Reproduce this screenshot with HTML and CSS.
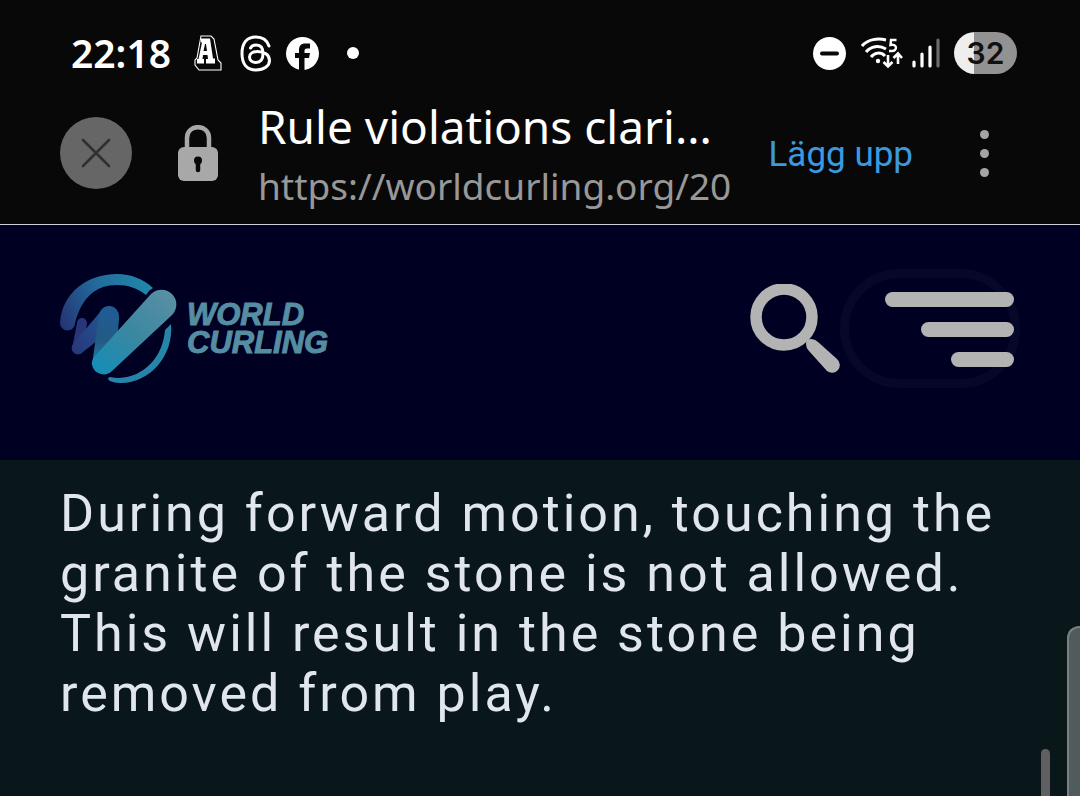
FILE: index.html
```html
<!DOCTYPE html>
<html lang="sv">
<head>
<meta charset="utf-8">
<meta name="viewport" content="width=device-width, initial-scale=1">
<title>Rule violations clarified</title>
<link rel="stylesheet" href="styles.css">
</head>
<body>
<div class="status-bar">
  <div class="status-left">
    <time class="clock">22:18</time>
    <svg class="note-a" width="28" height="36" viewBox="0 0 28 36" aria-hidden="true">
      <path d="M7 1H17L20 4L24 25L27 28V35H5L1 30V25L3 23Z" fill="none" stroke="#fff" stroke-width="1.1"/>
      <path fill-rule="evenodd" d="M7 3.500H16L19 23.500H21V28.500H12V24H14L13.500 20H9L8.500 24H10V28.500H3V24H4.500L8 7.500H7ZM11 9L9.500 16H13L12 9Z" fill="#fff"/>
    </svg>
    <svg class="threads" width="32" height="37" viewBox="0 0 32 37" fill="none" stroke="#fff" stroke-width="3" stroke-linecap="round" aria-hidden="true">
      <path d="M29 11C27 5 22.500 2 16 2C6.500 2 2 8.500 2 18.500S6.500 35 16 35C24 35 29.500 31 29.500 25.500C29.500 19.500 24 16.500 17.500 16.500C13 16.500 9.500 18.500 9.500 22C9.500 25.500 12.500 27.500 16 27.500C20.500 27.500 23 24.500 23 18.500C23 12.500 20.500 10 16.500 10C13.500 10 11.500 11 10.500 13"/>
    </svg>
    <svg class="facebook" width="33" height="33" viewBox="0 0 33 33" aria-hidden="true">
      <circle cx="16.500" cy="16.500" r="16.500" fill="#fff"/>
      <path d="M13 33V21H9V16H13V13C13 8.500 15.500 6.500 19 6.500H24V11.500H21C19 11.500 18.500 12.500 18.500 14V16H24L23 21H18.500V33Z" fill="#080808"/>
    </svg>
    <span class="more-notes"></span>
  </div>
  <div class="status-right">
    <svg width="33" height="33" viewBox="0 0 33 33" aria-hidden="true"><circle cx="16.500" cy="16.500" r="16.500" fill="#fff"/><path d="M9 16.500H24" stroke="#080808" stroke-width="4" stroke-linecap="round"/></svg>
    <svg class="wifi" width="42" height="32" viewBox="0 0 42 32" fill="none" stroke="#fff" stroke-width="3" aria-hidden="true">
      <path d="M1 9C7 2 17 1 25 3M5 15C10 9 18 8 25 12M10 20C14 15 20 15 24 19"/>
      <circle cx="17" cy="24" r="2.200" fill="#fff" stroke="none"/>
      <path d="M35.500 3H30L29.500 8C36.500 6.500 36.500 14 31 14H28" stroke-width="2.400"/>
      <path d="M27 18V29M22.500 25L27 29.500L31.500 25M37 27V17M32.500 21L37 16.500L41 21" stroke-width="2.600"/>
    </svg>
    <svg class="signal" width="28" height="30" viewBox="0 0 28 30" fill="none" stroke="#fff" stroke-width="3.200" stroke-linecap="round" aria-hidden="true"><path d="M2 24V28M10 16V28M18 9V28"/><path d="M26 2V28" stroke="#6b6b6b"/></svg>
    <span class="battery">32</span>
  </div>
</div>

<div class="browser-bar">
  <button class="close" aria-label="Stäng">
    <svg width="30" height="30" viewBox="0 0 30 30" stroke="#303030" stroke-width="2.600" stroke-linecap="round" aria-hidden="true"><path d="M2 2L28 28M28 2L2 28"/></svg>
  </button>
  <svg class="lock" width="40" height="56" viewBox="0 0 40 56" aria-hidden="true">
    <path d="M9 24V13C9 -1.500 31 -1.500 31 13V24" fill="none" stroke="#a8a8a8" stroke-width="4.500"/>
    <rect y="22" width="40" height="34" rx="6" fill="#a8a8a8"/>
    <path d="M20 36V45" stroke="#080808" stroke-width="4.500" stroke-linecap="round"/><circle cx="20" cy="35.500" r="4" fill="#080808"/>
  </svg>
  <div class="page-info">
    <div class="page-title">Rule violations clari...</div>
    <div class="page-url">https://worldcurling.org/20</div>
  </div>
  <button class="post">Lägg upp</button>
  <button class="more" aria-label="Fler alternativ"><span></span><span></span><span></span></button>
</div>

<header class="site-header">
  <a class="brand" href="#" aria-label="World Curling">
    <svg width="118" height="110" viewBox="0 0 118 110" aria-hidden="true">
      <defs>
        <linearGradient id="ring" gradientUnits="userSpaceOnUse" x1="0" y1="50" x2="90" y2="12"><stop offset="0" stop-color="#263474"/><stop offset=".5" stop-color="#216b9b"/><stop offset="1" stop-color="#2187aa"/></linearGradient>
        <linearGradient id="stem" gradientUnits="userSpaceOnUse" x1="48" y1="35" x2="45" y2="100"><stop offset="0" stop-color="#205b94"/><stop offset=".5" stop-color="#235b85"/><stop offset="1" stop-color="#218cb3"/></linearGradient>
        <linearGradient id="sweep" gradientUnits="userSpaceOnUse" x1="38" y1="96" x2="108" y2="22"><stop offset="0" stop-color="#168db6"/><stop offset=".5" stop-color="#3b87a0"/><stop offset="1" stop-color="#578fa3"/></linearGradient>
        <linearGradient id="thin" gradientUnits="userSpaceOnUse" x1="12" y1="75" x2="52" y2="38"><stop offset="0" stop-color="#29377b"/><stop offset="1" stop-color="#205b94"/></linearGradient>
      </defs>
      <path d="M0 49C2 19 27 0 57 0C71 0 83 5 93 14Q89 16 86 21C77 14 68 11 57 11C36 11 22 23 15 49A7.500 7.500 0 0 1 0 49Z" fill="url(#ring)"/>
      <path d="M111 50C114 83 88 110 60 109Q54 109 50 107Q46 104 50 103Q54 104 59 104C84 103 103 83 105 56Q108 53 111 50Z" fill="#2784a9"/>
      <path d="M17 49A5 5 0 0 1 27 49L26 56L23 76L12 75Z" fill="#293579"/>
      <path d="M13 70L41 37A10 10 0 0 1 56 52L23 78A6 6 0 0 1 13 70Z" fill="url(#thin)"/>
      <path d="M39 41A10 10 0 0 1 59 43L56 88L32 91Z" fill="url(#stem)"/>
      <path d="M35 82L91 20A14 14 0 0 1 112 41L52 97A12 12 0 0 1 32 91Q31 86 35 82Z" fill="url(#sweep)"/>
    </svg>
    <span class="wordmark"><span>WORLD</span><span>CURLING</span></span>
  </a>
  <div class="site-actions">
    <button class="search" aria-label="Search">
      <svg width="90" height="91" viewBox="0 0 90 91" aria-hidden="true"><circle cx="34" cy="33" r="28" fill="none" stroke="#b3b3b3" stroke-width="11.500"/><path d="M56 60Q56 55 61 55Q65 55 68 58L87 75A7.500 7.500 0 0 1 77 87L59 67Q56 64 56 60Z" fill="#b3b3b3"/></svg>
    </button>
    <button class="menu" aria-label="Menu">
      <svg width="180" height="120" viewBox="0 0 180 120" aria-hidden="true"><rect x="4.500" y="4.500" width="171" height="110" rx="55" fill="none" stroke="#050828" stroke-width="9"/><g fill="#b3b3b3"><rect x="45" y="23" width="129" height="15" rx="7.500"/><rect x="81" y="53" width="93" height="15" rx="7.500"/><rect x="111" y="83" width="63" height="15" rx="7.500"/></g></svg>
    </button>
  </div>
</header>

<main class="article">
  <p>During forward motion, touching the granite of the stone is not allowed.<br>This will result in the stone being removed from play.</p>
  <span class="scroll-thumb"></span>
  <span class="edge-panel"></span>
</main>
</body>
</html>
```
FILE: styles.css
```css
* { box-sizing: border-box; }
body {
  margin: 0;
  min-height: 100vh;
  display: flex;
  flex-direction: column;
  overflow: hidden;
  background: #080808;
  color: #fff;
  font-family: Inter, "Noto Sans", sans-serif;
}
button {
  border: 0;
  padding: 0;
  background: none;
  font: inherit;
  cursor: pointer;
}
svg { display: block; flex: none; }

.status-bar {
  display: flex;
  justify-content: space-between;
  align-items: center;
  height: 96px;
  padding: 10px 63px 0 71px;
}
.status-left, .status-right { display: flex; align-items: center; }
.clock { font: 600 39px/40px "Noto Sans", sans-serif; width: 123px; }
.threads { margin-left: 18px; }
.facebook { margin-left: 14px; }
.more-notes {
  width: 12px;
  height: 12px;
  margin-left: 28px;
  border-radius: 50%;
  background: #fff;
}
.wifi { margin-left: 15px; }
.signal { margin-left: 9px; }
.battery {
  width: 63px;
  height: 42px;
  margin-left: 14px;
  border-radius: 21px;
  background: linear-gradient(90deg, #eee 20px, #929292 20px);
  color: #111;
  font-size: 30px;
  font-weight: 600;
  line-height: 42px;
  text-align: center;
}

.browser-bar {
  display: flex;
  align-items: center;
  height: 129px;
  padding: 0 84px 14px 60px;
  border-bottom: 1px solid #d0d0d8;
}
.close {
  display: flex;
  align-items: center;
  justify-content: center;
  width: 72px;
  height: 72px;
  border-radius: 50%;
  background: #666;
}
.lock { margin-left: 46px; }
.page-info { flex: 1; margin-left: 40px; padding-top: 5px; min-width: 0; white-space: nowrap; }
.page-title { font: 46px/60px "Noto Sans", sans-serif; }
.page-url { font: 37px/60px "Noto Sans", sans-serif; color: #989898; }
.post { padding-top: 3px; font: 35px/48px Roboto, sans-serif; color: #3a9ae0; }
.more {
  display: flex;
  flex-direction: column;
  align-items: center;
  gap: 10px;
  width: 24px;
  margin-left: 59px;
}
.more span { width: 9px; height: 9px; border-radius: 50%; background: #a5a5a5; }

.site-header {
  display: flex;
  justify-content: space-between;
  align-items: flex-start;
  height: 235px;
  padding: 44px 60px 0;
  background: #000023;
}
.brand {
  display: flex;
  align-items: center;
  gap: 9px;
  margin-top: 5px;
  color: #558da2;
  text-decoration: none;
}
.wordmark {
  display: flex;
  flex-direction: column;
  font: italic bold 31px/28px "Liberation Sans", Arial, sans-serif;
  -webkit-text-stroke: 1px #558da2;
}
.site-actions { display: flex; align-items: center; }

.article {
  position: relative;
  flex: 1;
  padding: 24px 60px 60px;
  background: #09171b;
  color: #e1e6ed;
}
.article p {
  margin: 0;
  font: 400 52px/60px Roboto, sans-serif;
  letter-spacing: 3px;
}
.scroll-thumb {
  position: absolute;
  right: 30px;
  bottom: 0;
  width: 9px;
  height: 47px;
  border-radius: 5px 5px 0 0;
  background: #606062;
}
.edge-panel {
  position: absolute;
  right: 0;
  bottom: 0;
  width: 13px;
  height: 170px;
  border: solid #798082;
  border-width: 2px 0 0 2px;
  border-radius: 12px 0 0 0;
  background: #515a5c;
}
```
